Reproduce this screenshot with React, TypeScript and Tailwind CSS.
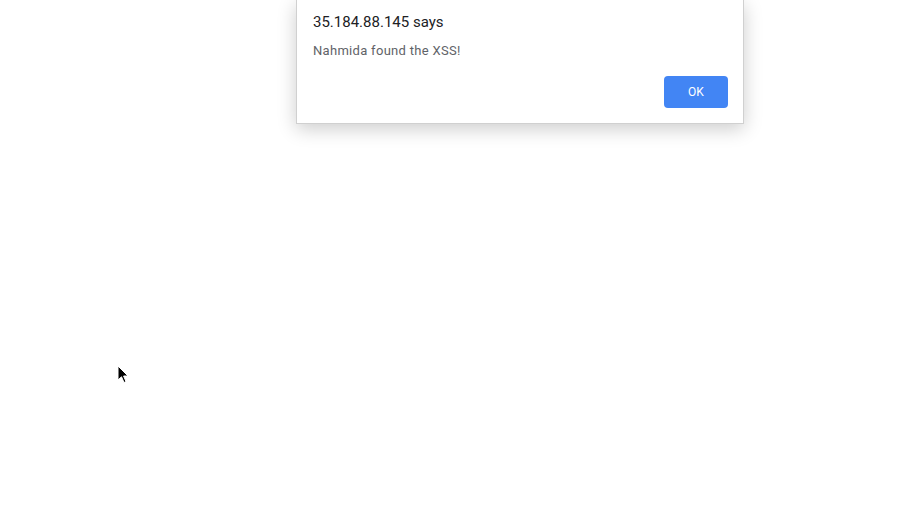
import React from "react";

const Cursor = () => (
  <svg width="14" height="20" viewBox="0 0 14 20" className="absolute left-[117px] top-[365px]">
    <path d="M1 1 L1 15 L4.5 11.8 L7 17.5 L9 16.6 L6.6 11 L11 11 Z" fill="#000" stroke="#fff" strokeWidth="1" strokeLinejoin="round" />
  </svg>
);

export default function App() {
  return (
    <div className="relative w-[907px] h-[520px] bg-white overflow-hidden font-['Roboto',sans-serif]">
      <div className="ml-[296px] w-[448px] h-[124px] bg-white border border-t-0 border-[#d0d0d0] shadow-[0_5px_18px_rgba(0,0,0,0.2)] pl-4 pr-[15px] pt-[12px] flex flex-col">
        <p className="text-[15px] leading-[20px] text-[#202124]">35.184.88.145 says</p>
        <p className="mt-[10px] text-[13px] leading-[18px] tracking-[0.3px] text-[#5f6368]">Nahmida found the XSS!</p>
        <div className="flex justify-end mt-[16px]">
          <button className="w-[64px] h-[32px] rounded-[4px] bg-[#4285f4] text-white text-[12px] font-normal">OK</button>
        </div>
      </div>
      <Cursor />
    </div>
  );
}
